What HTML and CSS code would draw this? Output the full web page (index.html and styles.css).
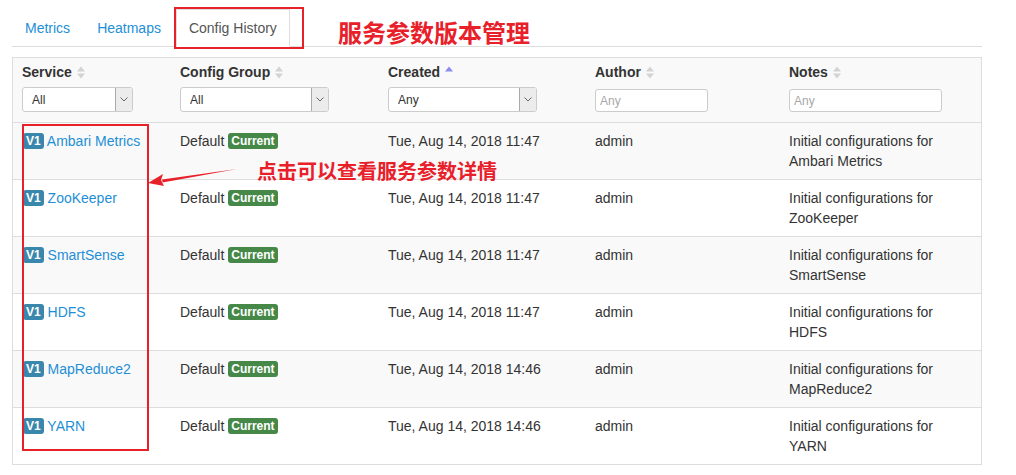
FILE: index.html
```html
<!DOCTYPE html>
<html>
<head>
<meta charset="utf-8">
<link rel="stylesheet" href="styles.css">
</head>
<body>
<div class="page">
  <ul class="tabs">
    <li><a>Metrics</a></li>
    <li><a>Heatmaps</a></li>
    <li class="active"><a>Config History</a></li>
  </ul>

  <table class="history">
    <thead>
      <tr>
        <th class="c-service">
          <div class="th-label">Service <svg class="sort" viewBox="0 0 8 13" width="8" height="13"><path d="M0 5.5L4 0.5L8 5.5Z" fill="#d3d3d3"/><path d="M0 7.5L4 12.5L8 7.5Z" fill="#d3d3d3"/></svg></div>
          <div class="sel sel-sm"><span>All</span><span class="sel-btn"><svg viewBox="0 0 8 5" width="8" height="5"><path d="M0.5 0.5L4 4L7.5 0.5" fill="none" stroke="#666" stroke-width="1"/></svg></span></div>
        </th>
        <th class="c-group">
          <div class="th-label">Config Group <svg class="sort" viewBox="0 0 8 13" width="8" height="13"><path d="M0 5.5L4 0.5L8 5.5Z" fill="#d3d3d3"/><path d="M0 7.5L4 12.5L8 7.5Z" fill="#d3d3d3"/></svg></div>
          <div class="sel sel-lg"><span>All</span><span class="sel-btn"><svg viewBox="0 0 8 5" width="8" height="5"><path d="M0.5 0.5L4 4L7.5 0.5" fill="none" stroke="#666" stroke-width="1"/></svg></span></div>
        </th>
        <th class="c-created">
          <div class="th-label">Created <svg class="sort" viewBox="0 0 8 13" width="8" height="13"><path d="M0 5.5L4 0.5L8 5.5Z" fill="#8a8cf0"/></svg></div>
          <div class="sel sel-lg"><span>Any</span><span class="sel-btn"><svg viewBox="0 0 8 5" width="8" height="5"><path d="M0.5 0.5L4 4L7.5 0.5" fill="none" stroke="#666" stroke-width="1"/></svg></span></div>
        </th>
        <th class="c-author">
          <div class="th-label">Author <svg class="sort" viewBox="0 0 8 13" width="8" height="13"><path d="M0 5.5L4 0.5L8 5.5Z" fill="#d3d3d3"/><path d="M0 7.5L4 12.5L8 7.5Z" fill="#d3d3d3"/></svg></div>
          <input class="inp inp-sm" placeholder="Any">
        </th>
        <th class="c-notes">
          <div class="th-label">Notes <svg class="sort" viewBox="0 0 8 13" width="8" height="13"><path d="M0 5.5L4 0.5L8 5.5Z" fill="#d3d3d3"/><path d="M0 7.5L4 12.5L8 7.5Z" fill="#d3d3d3"/></svg></div>
          <input class="inp inp-lg" placeholder="Any">
        </th>
      </tr>
    </thead>
    <tbody>
      <tr class="odd">
        <td><span class="badge-v">V1</span> <a class="svc">Ambari Metrics</a></td>
        <td>Default <span class="badge-cur">Current</span></td>
        <td>Tue, Aug 14, 2018 11:47</td>
        <td>admin</td>
        <td>Initial configurations for Ambari Metrics</td>
      </tr>
      <tr>
        <td><span class="badge-v">V1</span> <a class="svc">ZooKeeper</a></td>
        <td>Default <span class="badge-cur">Current</span></td>
        <td>Tue, Aug 14, 2018 11:47</td>
        <td>admin</td>
        <td>Initial configurations for ZooKeeper</td>
      </tr>
      <tr class="odd">
        <td><span class="badge-v">V1</span> <a class="svc">SmartSense</a></td>
        <td>Default <span class="badge-cur">Current</span></td>
        <td>Tue, Aug 14, 2018 11:47</td>
        <td>admin</td>
        <td>Initial configurations for SmartSense</td>
      </tr>
      <tr>
        <td><span class="badge-v">V1</span> <a class="svc">HDFS</a></td>
        <td>Default <span class="badge-cur">Current</span></td>
        <td>Tue, Aug 14, 2018 11:47</td>
        <td>admin</td>
        <td>Initial configurations for HDFS</td>
      </tr>
      <tr class="odd">
        <td><span class="badge-v">V1</span> <a class="svc">MapReduce2</a></td>
        <td>Default <span class="badge-cur">Current</span></td>
        <td>Tue, Aug 14, 2018 14:46</td>
        <td>admin</td>
        <td>Initial configurations for MapReduce2</td>
      </tr>
      <tr>
        <td><span class="badge-v">V1</span> <a class="svc">YARN</a></td>
        <td>Default <span class="badge-cur">Current</span></td>
        <td>Tue, Aug 14, 2018 14:46</td>
        <td>admin</td>
        <td>Initial configurations for YARN</td>
      </tr>
    </tbody>
  </table>

  <div class="mark mark-tab"></div>
  <div class="note note-title">服务参数版本管理</div>
  <div class="mark mark-col"></div>
  <svg class="arrow" viewBox="0 0 100 30" width="100" height="30">
    <path d="M92 4 L17 14.5 L17.6 17.5 Z" fill="#e8202a"/>
    <path d="M3 18 L18 9 L16 15 L19 21 Z" fill="#e8202a"/>
  </svg>
  <div class="note note-detail">点击可以查看服务参数详情</div>
</div>
</body>
</html>
```

FILE: styles.css
```css
* { box-sizing: border-box; }

html, body {
  margin: 0;
  padding: 0;
  background: #fff;
}

body {
  font-family: "Liberation Sans", Arial, "Noto Sans CJK SC", sans-serif;
  font-size: 14px;
  line-height: 20px;
  color: #333;
}

.page {
  position: relative;
  width: 1016px;
  height: 475px;
  padding: 9px 0 0 12px;
}

/* tabs */
.tabs {
  list-style: none;
  margin: 0;
  padding: 0 0 0 1px;
  width: 970px;
  display: flex;
  border-bottom: 1px solid #ddd;
}

.tabs li {
  margin-right: 3px;
  margin-bottom: -1px;
}

.tabs a {
  display: block;
  padding: 8px 11px;
  line-height: 20px;
  border: 1px solid transparent;
  border-bottom: 0;
  color: #1e8fd6;
}

.tabs .active a {
  color: #555;
  background: #fff;
  border-color: #ddd;
  border-bottom: 1px solid #fff;
  padding: 8px 12px;
}

/* table */
.history {
  margin-top: 10px;
  width: 970px;
  table-layout: fixed;
  border-collapse: separate;
  border-spacing: 0;
  border: 1px solid #ddd;
}

.c-service { width: 158px; }
.c-group { width: 208px; }
.c-created { width: 207px; }
.c-author { width: 194px; }
.c-notes { width: 201px; }

.history th {
  text-align: left;
  vertical-align: top;
  padding: 4px 9px 10px 9px;
  background: #f9f9f9;
  font-weight: bold;
}

.th-label {
  height: 20px;
  line-height: 20px;
  display: flex;
  align-items: center;
  white-space: nowrap;
}

.sort {
  margin-left: 5px;
  margin-top: 1px;
}

.sel {
  margin-top: 5px;
  height: 25px;
  border: 1px solid #ccc;
  border-radius: 3px;
  background: #fff;
  display: flex;
  align-items: center;
  justify-content: space-between;
  font-weight: normal;
  font-size: 12px;
  color: #333;
  padding: 0 0 0 9px;
}

.sel-sm { width: 111px; }
.sel-lg { width: 149px; }

.sel-btn {
  width: 17px;
  height: 23px;
  border-left: 1px solid #aaa;
  background: #ececec;
  display: flex;
  align-items: center;
  justify-content: center;
  border-radius: 0 2px 2px 0;
}

.inp {
  display: block;
  margin-top: 7px;
  height: 23px;
  border: 1px solid #ccc;
  border-radius: 3px;
  padding: 0 4px;
  font-family: "Liberation Sans", Arial, sans-serif;
  font-size: 12px;
  color: #333;
  background: #fff;
}

.inp::placeholder { color: #a8a8a8; }

.inp-sm { width: 113px; }
.inp-lg { width: 153px; }

.history td {
  vertical-align: top;
  padding: 8px 9px 8px 9px;
  line-height: 20px;
  border-top: 1px solid #ddd;
}

.history tr.odd td { background: #f9f9f9; }

.badge-v {
  display: inline-block;
  margin-left: 1px;
  height: 16px;
  line-height: 16px;
  padding: 0 3px;
  border-radius: 3px;
  background: #3a87ad;
  color: #fff;
  font-size: 12px;
  font-weight: bold;
  vertical-align: 1px;
}

.svc {
  color: #1e8fd6;
}

.badge-cur {
  display: inline-block;
  height: 16px;
  line-height: 16px;
  padding: 0 3px;
  border-radius: 3px;
  background: #468847;
  color: #fff;
  font-size: 12px;
  font-weight: bold;
  vertical-align: 1px;
}

/* annotations */
.mark {
  position: absolute;
  border: 2px solid #e8202a;
}

.mark-tab {
  left: 174px;
  top: 7px;
  width: 130px;
  height: 42px;
}

.mark-col {
  left: 22px;
  top: 124px;
  width: 127px;
  height: 327px;
}

.note {
  position: absolute;
  color: #e8202a;
  font-family: "Noto Sans CJK SC", sans-serif;
  font-weight: bold;
  white-space: nowrap;
}

.note-title {
  left: 338px;
  top: 16px;
  font-size: 24px;
  line-height: 32px;
}

.note-detail {
  left: 257px;
  top: 157px;
  font-size: 20px;
  line-height: 28px;
}

.arrow {
  position: absolute;
  left: 145px;
  top: 165px;
}
```
